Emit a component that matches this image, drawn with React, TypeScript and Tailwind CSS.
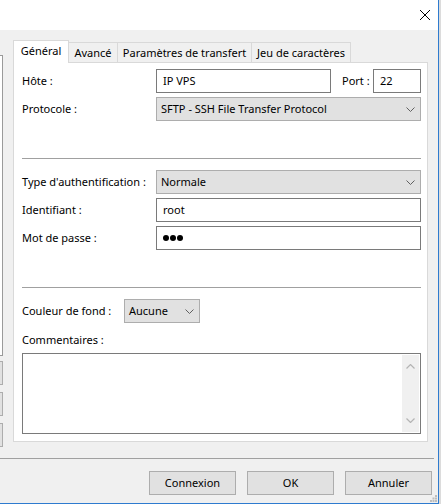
import React from "react";

const font = { fontFamily: '"Noto Sans", "Liberation Sans", sans-serif' };

function Chevron() {
  return (
    <svg width="9" height="5" viewBox="0 0 9 5" className="shrink-0">
      <path d="M0.5 0.5 L4.5 4.5 L8.5 0.5" fill="none" stroke="#606060" strokeWidth="1" />
    </svg>
  );
}

function Input({ value, className = "" }: { value?: React.ReactNode; className?: string }) {
  return (
    <div className={`h-[24px] bg-white border border-[#7a7a7a] flex items-center pl-[6px] pb-[2px] ${className}`}>
      {value}
    </div>
  );
}

function Select({ value, className = "" }: { value: string; className?: string }) {
  return (
    <div className={`h-[24px] bg-[#e1e1e1] border border-[#adadad] flex items-center justify-between pl-[4px] pr-[5px] ${className}`}>
      <span className="pb-[2px]">{value}</span>
      <Chevron />
    </div>
  );
}

function Row({ label, children }: { label: string; children: React.ReactNode }) {
  return (
    <div className="flex items-center h-[24px]">
      <div className="w-[134px] shrink-0 pb-[2px]">{label}</div>
      <div className="flex-1 flex items-center">{children}</div>
    </div>
  );
}

const tabs = [
  { label: "Avancé", w: "w-[49px]" },
  { label: "Paramètres de transfert", w: "w-[134px]" },
  { label: "Jeu de caractères", w: "w-[99px]" },
];

export default function App() {
  return (
    <div className="w-[441px] h-[504px] bg-[#dcdcdc] flex text-[11px] leading-[15px] text-black whitespace-nowrap" style={font}>
      <div className="w-[439px] h-[504px] flex flex-col border-r border-b border-[#2e7bcf] bg-[#f0f0f0] relative">
        {/* barre de titre */}
        <div className="h-[30px] bg-white flex items-center justify-end pr-[8px]">
          <svg width="10" height="10" viewBox="0 0 10 10">
            <path d="M0 0 L10 10 M10 0 L0 10" stroke="#000" strokeWidth="1" />
          </svg>
        </div>

        <div className="h-[428px] flex">
          {/* panneau gauche (arbre + boutons) */}
          <div className="w-[3px] shrink-0 flex flex-col">
            <div className="mt-[25px] h-[301px] border-y border-r border-[#9a9a9a] bg-white" />
            <div className="mt-[5px] h-[24px] border-y border-r border-[#adadad] bg-[#e1e1e1]" />
            <div className="mt-[7px] h-[24px] border-y border-r border-[#adadad] bg-[#e1e1e1]" />
            <div className="mt-[7px] h-[24px] border-y border-r border-[#adadad] bg-[#e1e1e1]" />
          </div>

          {/* onglets */}
          <div className="pl-[10px] pt-[10px] flex flex-col">
            <div className="flex items-end h-[22px] relative z-10">
              <div className="w-[56px] h-[23px] -mb-px bg-white border-x border-t border-[#d9d9d9] flex justify-center pt-[2px]">
                Général
              </div>
              {tabs.map((t) => (
                <div
                  key={t.label}
                  className={`${t.w} h-[20px] border-r border-t border-[#d9d9d9] flex justify-center items-center`}
                >
                  {t.label}
                </div>
              ))}
            </div>

            <div className="w-[415px] h-[380px] bg-white border border-[#d9d9d9] pl-[8px] pr-[6px] pt-[6px] flex flex-col">
              <div className="flex items-center h-[24px]">
                <div className="w-[134px] shrink-0 pb-[2px]">Hôte :</div>
                <Input value="IP VPS" className="w-[175px]" />
                <div className="flex-1 pl-[11px] pb-[2px]">Port :</div>
                <Input value="22" className="w-[48px]" />
              </div>
              <div className="mt-[4px]">
                <Row label="Protocole :">
                  <Select value="SFTP - SSH File Transfer Protocol" className="flex-1" />
                </Row>
              </div>

              <div className="mt-[37px] h-px bg-[#a0a0a0]" />

              <div className="mt-[11px] flex flex-col gap-[4px]">
                <Row label="Type d'authentification :">
                  <Select value="Normale" className="flex-1" />
                </Row>
                <Row label="Identifiant :">
                  <Input value="root" className="flex-1" />
                </Row>
                <Row label="Mot de passe :">
                  <Input
                    className="flex-1 gap-[1px] !pb-0"
                    value={
                      <>
                        <span className="w-[6px] h-[6px] rounded-full bg-black" />
                        <span className="w-[6px] h-[6px] rounded-full bg-black" />
                        <span className="w-[6px] h-[6px] rounded-full bg-black" />
                      </>
                    }
                  />
                </Row>
              </div>

              <div className="mt-[37px] h-px bg-[#a0a0a0]" />

              <div className="mt-[11px] flex items-center h-[24px]">
                <div className="w-[102px] shrink-0 pb-[2px]">Couleur de fond :</div>
                <Select value="Aucune" className="w-[76px]" />
              </div>

              <div className="mt-[9px] h-[17px]">Commentaires :</div>

              <div className="mt-[4px] h-[81px] border border-[#7a7a7a] bg-white flex justify-end p-px">
                <div className="w-[17px] bg-[#f0f0f0] flex flex-col items-center justify-between py-[9px]">
                  <svg width="9" height="5" viewBox="0 0 9 5">
                    <path d="M0.5 4.5 L4.5 0.5 L8.5 4.5" fill="none" stroke="#b4b4b4" strokeWidth="1.2" />
                  </svg>
                  <svg width="9" height="5" viewBox="0 0 9 5">
                    <path d="M0.5 0.5 L4.5 4.5 L8.5 0.5" fill="none" stroke="#b4b4b4" strokeWidth="1.2" />
                  </svg>
                </div>
              </div>
            </div>
          </div>
        </div>

        <div className="w-[434px] h-px bg-[#a0a0a0]" />

        {/* boutons du bas */}
        <div className="flex-1 flex justify-end items-start pt-[12px] pr-[6px] gap-[11px]">
          {["Connexion", "OK", "Annuler"].map((b) => (
            <div
              key={b}
              className="w-[87px] h-[24px] bg-[#e1e1e1] border border-[#adadad] flex items-center justify-center pb-[2px]"
            >
              {b}
            </div>
          ))}
        </div>

        {/* poignée de redimensionnement */}
        <svg className="absolute right-[1px] bottom-[1px]" width="7" height="7" viewBox="0 0 7 7">
          <rect x="5" y="0" width="2" height="2" fill="#bdbdbd" />
          <rect x="2.5" y="2.5" width="2" height="2" fill="#bdbdbd" />
          <rect x="5" y="2.5" width="2" height="2" fill="#bdbdbd" />
          <rect x="0" y="5" width="2" height="2" fill="#bdbdbd" />
          <rect x="2.5" y="5" width="2" height="2" fill="#bdbdbd" />
          <rect x="5" y="5" width="2" height="2" fill="#bdbdbd" />
        </svg>
      </div>
    </div>
  );
}
